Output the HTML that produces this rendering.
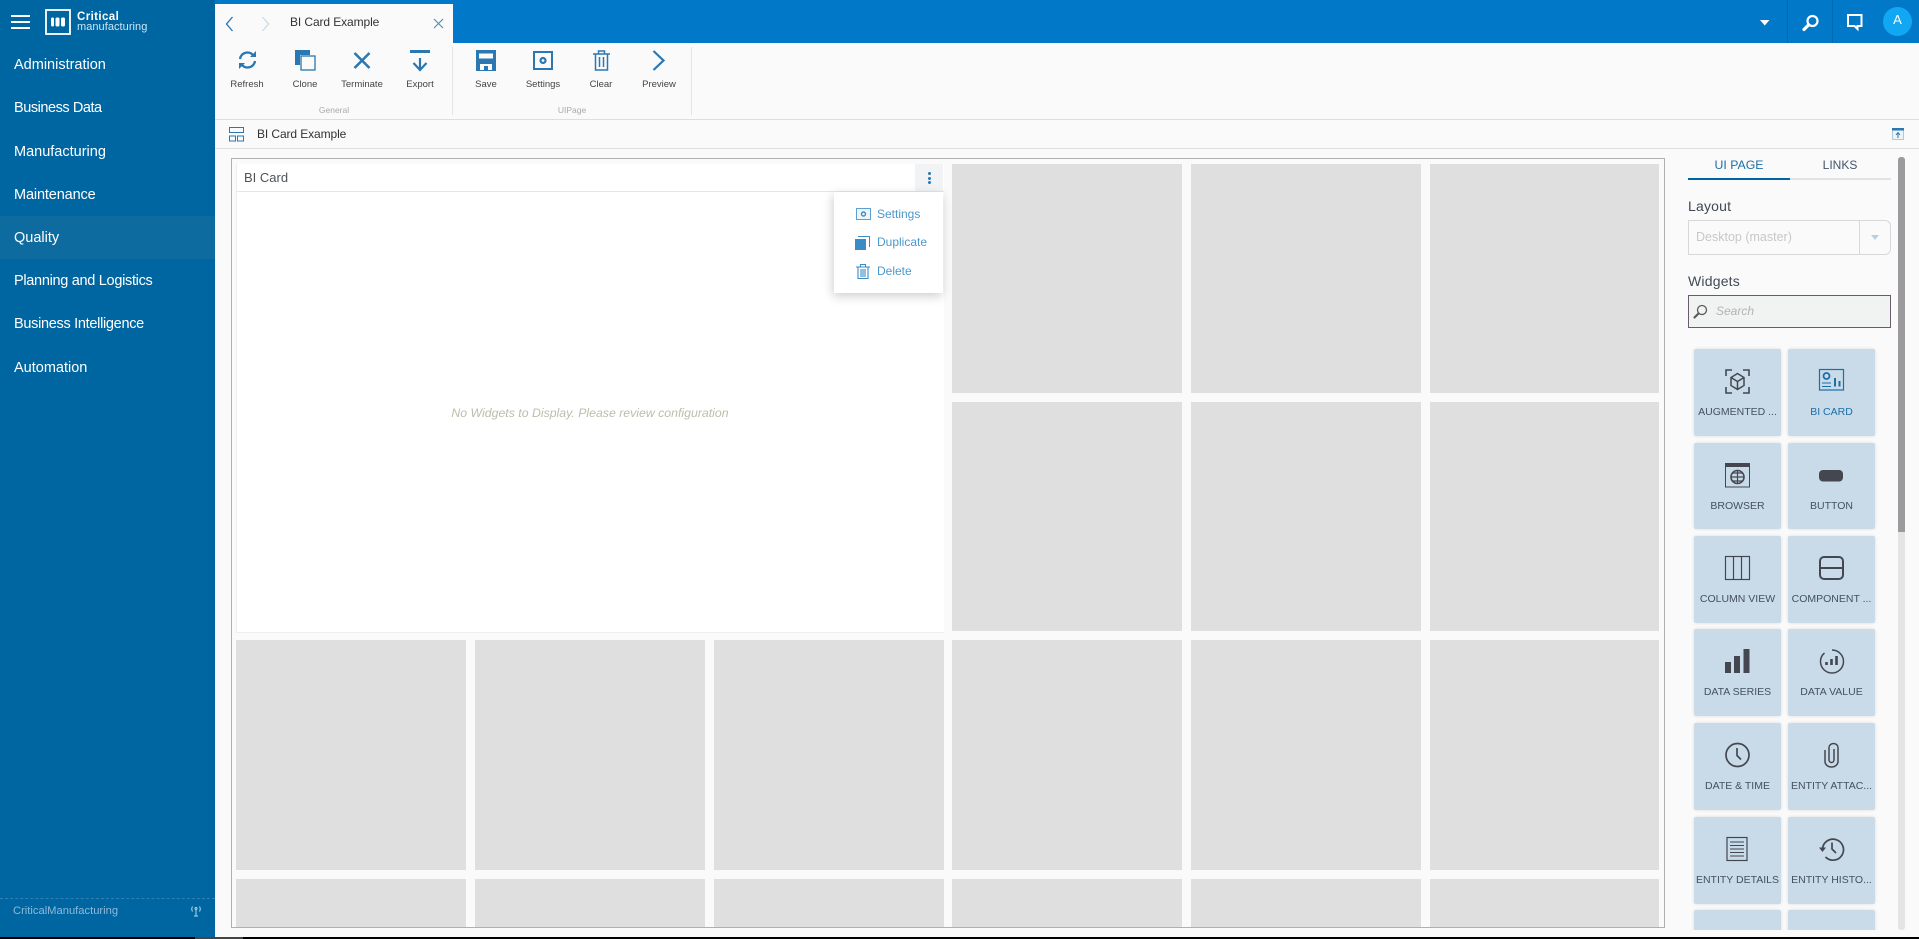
<!DOCTYPE html>
<html><head><meta charset="utf-8"><title>BI Card Example</title>
<style>
html,body{margin:0;padding:0;width:1919px;height:939px;overflow:hidden;background:#000;font-family:"Liberation Sans",sans-serif}
#root{position:relative;width:1919px;height:937px;background:#fafafa;overflow:hidden}
.a{position:absolute}
.t{position:absolute;white-space:nowrap;line-height:16px}
.c{transform:translateX(-50%)}
.nav{position:absolute;left:14px;color:#fff;font-size:14.5px;line-height:18px;white-space:nowrap}
.rl{position:absolute;top:77px;font-size:9.5px;line-height:16px;color:#444;transform:translateX(-50%);white-space:nowrap}
.gl{position:absolute;top:102px;font-size:8.5px;line-height:16px;color:#aaa;transform:translateX(-50%);white-space:nowrap}
.ic{position:absolute;overflow:visible}
.cell{position:absolute;background:#dfdfdf;width:230px}
.tile{position:absolute;width:87px;height:87px;background:#c9dbe9;border-radius:2px;box-shadow:0 0 3px rgba(0,0,0,.12)}
.tile svg{position:absolute;left:31px;top:20px;width:25px;height:25px;overflow:visible}
.tile span{position:absolute;left:0;right:0;top:55px;text-align:center;font-size:10.5px;line-height:16px;color:#45515c;white-space:nowrap}
</style></head>
<body><div id="root">
<!-- top bar -->
<div class="a" style="left:215px;top:0;width:1704px;height:43px;background:#0278c9"></div>
<div class="a" style="left:1787px;top:0;width:1px;height:43px;background:#0268b4"></div>
<div class="a" style="left:1832px;top:0;width:1px;height:43px;background:#0268b4"></div>
<svg class="ic" style="left:1760px;top:20px" width="10" height="6"><path d="M0 0h9.500L4.750 5.500z" fill="#fff"/></svg>
<svg class="ic" style="left:1802px;top:14px" width="18" height="18" fill="none" stroke="#fff"><circle cx="10.500" cy="7" r="5" stroke-width="2.200"/><path d="M6.500 11L2 15.500" stroke-width="3.200" stroke-linecap="round"/></svg>
<svg class="ic" style="left:1847px;top:14px" width="16" height="16"><path d="M1 1h13.500v11h-4v3l-3-3H1z" fill="none" stroke="#fff" stroke-width="2"/></svg>
<div class="a" style="left:1883px;top:7px;width:29px;height:29px;border-radius:50%;background:#12a7f2"></div>
<div class="t c" style="left:1897.500px;top:12px;color:#fff;font-size:13px">A</div>
<!-- sidebar -->
<div class="a" style="left:0;top:0;width:215px;height:937px;background:#0066a2"></div>
<div class="a" style="left:0;top:216px;width:215px;height:43px;background:#0e6b9f"></div>
<div class="a" style="left:11px;top:15px;width:19px;height:2px;background:#fff"></div>
<div class="a" style="left:11px;top:21px;width:19px;height:2px;background:#fff"></div>
<div class="a" style="left:11px;top:27px;width:19px;height:2px;background:#fff"></div>
<svg class="ic" style="left:45px;top:9px" width="26" height="26"><rect x="1" y="1" width="24" height="24" fill="none" stroke="#fff" stroke-width="1.800"/><rect x="6" y="8.500" width="3" height="9" rx="1.500" fill="#fff"/><rect x="10.500" y="8.500" width="4" height="9" rx="1.500" fill="#fff"/><rect x="16" y="8.500" width="4" height="9" rx="1.500" fill="#fff"/></svg>
<div class="t" style="left:77px;top:9px;color:#fff;font-size:11.500px;font-weight:bold;letter-spacing:.4px">Critical</div>
<div class="t" style="left:77px;top:19px;color:#cfe3f2;font-size:11px;letter-spacing:.05px">manufacturing</div>
<div class="nav" style="top:56px">Administration</div>
<div class="nav" style="top:99px;letter-spacing:-.45px">Business Data</div>
<div class="nav" style="top:143px">Manufacturing</div>
<div class="nav" style="top:186px;letter-spacing:-.13px">Maintenance</div>
<div class="nav" style="top:229px">Quality</div>
<div class="nav" style="top:272px;letter-spacing:-.3px">Planning and Logistics</div>
<div class="nav" style="top:315px;letter-spacing:-.3px">Business Intelligence</div>
<div class="nav" style="top:359px">Automation</div>
<div class="a" style="left:0;top:898px;width:215px;border-top:1px dashed #2f80b4"></div>
<div class="t" style="left:13px;top:903px;color:#8dbadb;font-size:11.200px">CriticalManufacturing</div>
<svg class="ic" style="left:190px;top:905px" width="12" height="12" fill="none" stroke="#b5d5ea" stroke-width="1"><path d="M6 4v7M4 11h4M2.500 1.500q-1.500 2.500 0 5M9.500 1.500q1.500 2.500 0 5"/><circle cx="6" cy="3.500" r="1"/></svg>
<!-- tab -->
<div class="a" style="left:215px;top:4px;width:238px;height:39px;background:#fafafa"></div>
<svg class="ic" style="left:225px;top:16px" width="10" height="16"><path d="M7.500 1L1.500 8l6 7" fill="none" stroke="#2374ad" stroke-width="1.300"/></svg>
<svg class="ic" style="left:261px;top:16px" width="10" height="16"><path d="M1.500 1l6 7-6 7" fill="none" stroke="#c9dbe6" stroke-width="1.300"/></svg>
<div class="t" style="left:290px;top:14px;font-size:12px;letter-spacing:-.1px;color:#333">BI Card Example</div>
<svg class="ic" style="left:433px;top:18px" width="11" height="11"><path d="M1 1l9 9M10 1l-9 9" stroke="#5c8fb0" stroke-width="1.200"/></svg>
<!-- ribbon -->
<svg class="ic" style="left:238px;top:50px" width="19" height="20" fill="none" stroke="#2a77b1" stroke-width="2.400"><path d="M2 9a7.500 7.500 0 0 1 13-4"/><path d="M17 11a7.500 7.500 0 0 1-13 4"/><path d="M18 1v6h-6z" fill="#2a77b1" stroke="none"/><path d="M1 19v-6h6z" fill="#2a77b1" stroke="none"/></svg>
<svg class="ic" style="left:295px;top:50px" width="21" height="21"><path d="M0 0h15v5H5v10H0z" fill="#2a77b1"/><rect x="6" y="6" width="14" height="14" fill="#fafafa" stroke="#2a77b1" stroke-width="1.300"/></svg>
<svg class="ic" style="left:353px;top:52px" width="18" height="17"><path d="M1.500 1l15 15M16.500 1l-15 15" stroke="#2a77b1" stroke-width="2.600"/></svg>
<svg class="ic" style="left:410px;top:50px" width="20" height="21" fill="none" stroke="#2a77b1"><path d="M0 1.500h20" stroke-width="3"/><path d="M10 8v12" stroke-width="2.200"/><path d="M3.500 13l6.500 7 6.500-7" stroke-width="2.200"/></svg>
<svg class="ic" style="left:476px;top:50px" width="20" height="21"><path d="M0 0h20v21H0z" fill="#2a77b1"/><rect x="3" y="3.500" width="14" height="5" fill="#fafafa"/><path d="M4 20v-6h12v6z" fill="#fafafa"/><rect x="8" y="16" width="4" height="4" fill="#2a77b1"/></svg>
<svg class="ic" style="left:533px;top:51px" width="20" height="19"><rect x="1" y="1" width="18" height="17" fill="none" stroke="#2a77b1" stroke-width="2"/><circle cx="10" cy="9.500" r="2.500" fill="none" stroke="#2a77b1" stroke-width="2.200"/></svg>
<svg class="ic" style="left:593px;top:50px" width="17" height="21" fill="none" stroke="#2a77b1" stroke-width="1.500"><path d="M0 4h17M5.500 4V1h6v3M2.500 4v16h12V4M6.500 7v10M10.500 7v10"/></svg>
<svg class="ic" style="left:652px;top:50px" width="14" height="21"><path d="M1.500 1l10 9.500-10 9.500" fill="none" stroke="#2a77b1" stroke-width="2.200"/></svg>
<div class="rl" style="left:247px">Refresh</div>
<div class="rl" style="left:305px">Clone</div>
<div class="rl" style="left:362px">Terminate</div>
<div class="rl" style="left:420px">Export</div>
<div class="rl" style="left:486px">Save</div>
<div class="rl" style="left:543px">Settings</div>
<div class="rl" style="left:601px">Clear</div>
<div class="rl" style="left:659px">Preview</div>
<div class="gl" style="left:334px">General</div>
<div class="gl" style="left:572px">UIPage</div>
<div class="a" style="left:452px;top:47px;width:1px;height:68px;background:#e4e4e4"></div>
<div class="a" style="left:691px;top:47px;width:1px;height:68px;background:#e4e4e4"></div>
<div class="a" style="left:215px;top:119px;width:1704px;height:1px;background:#dedede"></div>
<div class="a" style="left:215px;top:148px;width:1704px;height:1px;background:#dedede"></div>
<!-- sub bar -->
<svg class="ic" style="left:229px;top:127px" width="15" height="15" fill="none" stroke="#2a77b1"><rect x=".5" y=".5" width="14" height="5"/><rect x=".5" y="9" width="6" height="5"/><rect x="8.500" y="9" width="6" height="5"/></svg>
<div class="t" style="left:257px;top:126px;font-size:12px;letter-spacing:-.1px;color:#333">BI Card Example</div>
<svg class="ic" style="left:1892px;top:128px" width="12" height="12"><rect x=".5" y=".5" width="11" height="11" fill="#eef3f7" stroke="#b4c9d8"/><rect x="0" y="0" width="12" height="2.500" fill="#2a77b1"/><path d="M6 10V5M4 7l2-2.500L8 7" fill="none" stroke="#2a77b1"/></svg>
<!-- canvas -->
<div class="a" style="left:231px;top:158px;border:1px solid #b0b0b0;box-sizing:content-box;width:1432px;height:768px;overflow:hidden;background:#fafafa">
<div style="position:absolute;left:-232px;top:-159px;width:1919px;height:939px">
<div class="cell" style="left:952px;top:164px;height:229px"></div>
<div class="cell" style="left:1191px;top:164px;height:229px"></div>
<div class="cell" style="left:1430px;top:164px;height:229px;width:229px"></div>
<div class="cell" style="left:952px;top:402px;height:229px"></div>
<div class="cell" style="left:1191px;top:402px;height:229px"></div>
<div class="cell" style="left:1430px;top:402px;height:229px;width:229px"></div>
<div class="cell" style="left:236px;top:640px;height:230px"></div>
<div class="cell" style="left:475px;top:640px;height:230px"></div>
<div class="cell" style="left:714px;top:640px;height:230px"></div>
<div class="cell" style="left:952px;top:640px;height:230px"></div>
<div class="cell" style="left:1191px;top:640px;height:230px"></div>
<div class="cell" style="left:1430px;top:640px;height:230px;width:229px"></div>
<div class="cell" style="left:236px;top:879px;height:60px"></div>
<div class="cell" style="left:475px;top:879px;height:60px"></div>
<div class="cell" style="left:714px;top:879px;height:60px"></div>
<div class="cell" style="left:952px;top:879px;height:60px"></div>
<div class="cell" style="left:1191px;top:879px;height:60px"></div>
<div class="cell" style="left:1430px;top:879px;height:60px;width:229px"></div>
<!-- card -->
<div class="a" style="left:236px;top:164px;width:708px;height:469px;background:#fff;border-left:1px solid #eee;border-bottom:1px solid #eee;box-sizing:border-box"></div>
<div class="a" style="left:236px;top:191px;width:708px;height:1px;background:#e6e6e6"></div>
<div class="a" style="left:915px;top:164px;width:28px;height:27px;background:#f1f3f5"></div>
<div class="a" style="left:928px;top:172px;width:3px;height:3px;background:#2a77b1;border-radius:50%"></div>
<div class="a" style="left:928px;top:176.500px;width:3px;height:3px;background:#2a77b1;border-radius:50%"></div>
<div class="a" style="left:928px;top:181px;width:3px;height:3px;background:#2a77b1;border-radius:50%"></div>
<div class="t" style="left:244px;top:170px;font-size:13px;color:#4e5358">BI Card</div>
<div class="t c" style="left:590px;top:405px;font-size:12.300px;font-style:italic;color:#bdbdab">No Widgets to Display. Please review configuration</div>
<!-- menu -->
<div class="a" style="left:834px;top:192px;width:109px;height:101px;background:#fff;box-shadow:-1px 3px 10px rgba(0,0,0,.2)"></div>
<svg class="ic" style="left:856px;top:208px" width="15" height="12"><rect x=".5" y=".5" width="14" height="11" fill="#eef5fa" stroke="#5aa0d0"/><circle cx="7.500" cy="6" r="2" fill="none" stroke="#3b8bc4" stroke-width="1.400"/></svg>
<svg class="ic" style="left:855px;top:236px" width="15" height="14"><path d="M3 0h12v11h-1V1H3z" fill="#3b8bc4"/><rect x="0" y="3" width="11" height="11" fill="#3b8bc4"/></svg>
<svg class="ic" style="left:856px;top:264px" width="14" height="15" fill="none" stroke="#3b8bc4" stroke-width="1.100"><path d="M0 3h14M4.500 3V.5h5V3M2 3v11.500h10V3M5 5v8M7 5v8M9 5v8"/></svg>
<div class="t" style="left:877px;top:206px;font-size:12px;color:#4a98cc">Settings</div>
<div class="t" style="left:877px;top:234px;font-size:12px;color:#4a98cc">Duplicate</div>
<div class="t" style="left:877px;top:263px;font-size:12px;color:#4a98cc">Delete</div>
</div></div>
<!-- right panel -->
<div class="t c" style="left:1739px;top:157px;font-size:12.300px;color:#1c6ea8">UI PAGE</div>
<div class="t c" style="left:1840px;top:157px;font-size:12px;color:#44546a">LINKS</div>
<div class="a" style="left:1688px;top:178px;width:203px;height:2px;background:#e2e2e2"></div>
<div class="a" style="left:1688px;top:178px;width:102px;height:2px;background:#0066a2"></div>
<div class="t" style="left:1688px;top:198px;font-size:14px;color:#3f4a55;letter-spacing:.2px">Layout</div>
<div class="a" style="left:1688px;top:220px;width:203px;height:35px;border:1px solid #d8d8d8;border-radius:0 6px 6px 0;box-sizing:border-box"></div>
<div class="a" style="left:1859px;top:220px;width:1px;height:35px;background:#d8d8d8"></div>
<svg class="ic" style="left:1870px;top:235px" width="10" height="6"><path d="M1 0h8L5 5z" fill="#b6d2e2"/></svg>
<div class="t" style="left:1696px;top:229px;font-size:12.500px;color:#c8c8c8">Desktop (master)</div>
<div class="t" style="left:1688px;top:273px;font-size:14px;color:#3f4a55;letter-spacing:.2px">Widgets</div>
<div class="a" style="left:1688px;top:295px;width:203px;height:33px;border:1px solid #6b5a6e;background:#f1f3f2;box-sizing:border-box"></div>
<svg class="ic" style="left:1693px;top:304px" width="15" height="15" fill="none" stroke="#5a5a5a"><circle cx="9" cy="6" r="4.500" stroke-width="1.300"/><path d="M5.500 9.500L1.500 13.500" stroke-width="2.200" stroke-linecap="round"/></svg>
<div class="t" style="left:1716px;top:303px;font-size:12px;font-style:italic;color:#b3b3b3">Search</div>
<div class="a" style="left:1898px;top:157px;width:7px;height:773px;background:#e4e4e4;border-radius:3px"></div>
<div class="a" style="left:1898px;top:157px;width:7px;height:375px;background:#9b9a9c;border-radius:3px 3px 0 0"></div>
<!-- tiles -->
<div class="tile" style="left:1694px;top:349px"><svg viewBox="0 0 25 25" fill="none" stroke="#44474f" stroke-width="1.500"><path d="M1 7V1h6M18 1h6v6M1 18v6h6M24 18v6h-6" stroke-width="1.600"/><path d="M12.500 4.500l6.500 4v8l-6.500 4-6.500-4v-8zM6 8.500l6.500 4 6.500-4M12.500 12.500v8"/></svg><span>AUGMENTED ...</span></div>
<div class="tile" style="left:1788px;top:349px"><svg viewBox="0 0 25 25" fill="none" stroke="#1c6ea8"><rect x=".5" y=".5" width="24" height="20.500" stroke-width="1.200"/><circle cx="7.500" cy="7" r="3" stroke-width="1.800"/><path d="M3 14h9M3 17.500h9"/><path d="M16 17.500V9M20.500 17.500V12" stroke-width="2"/></svg><span style="color:#1c6ea8">BI CARD</span></div>
<div class="tile" style="left:1694px;top:443px;height:86px"><svg viewBox="0 0 25 25" fill="none" stroke="#44474f"><rect x=".5" y=".5" width="24" height="23.500"/><rect x="0" y="0" width="25" height="4" fill="#44474f" stroke="none"/><circle cx="12.500" cy="14" r="6.500" stroke-width="1.600"/><path d="M6 14h13M12.500 7.500v13M8 10h9M8 18h9" stroke-width="1.200"/></svg><span>BROWSER</span></div>
<div class="tile" style="left:1788px;top:443px;height:86px"><svg viewBox="0 0 25 25"><rect x="0" y="7" width="24" height="11.500" rx="4" fill="#44474f"/></svg><span>BUTTON</span></div>
<div class="tile" style="left:1694px;top:536px"><svg viewBox="0 0 25 25" fill="none" stroke="#44474f" stroke-width="1.200"><rect x=".5" y=".5" width="24" height="23"/><path d="M8.500 0v24M16.500 0v24"/></svg><span>COLUMN VIEW</span></div>
<div class="tile" style="left:1788px;top:536px"><svg viewBox="0 0 25 25" fill="none" stroke="#44474f" stroke-width="2"><rect x="1" y="1" width="23" height="22" rx="4"/><path d="M1 12h23"/></svg><span>COMPONENT ...</span></div>
<div class="tile" style="left:1694px;top:629px"><svg viewBox="0 0 25 25" fill="#44474f"><rect x="0" y="13" width="6" height="11"/><rect x="9" y="7" width="6" height="17"/><rect x="18.500" y="0" width="6" height="24"/></svg><span>DATA SERIES</span></div>
<div class="tile" style="left:1788px;top:629px"><svg viewBox="0 0 25 25" fill="none" stroke="#44474f"><path d="M13 1a11.500 11.500 0 1 1-11.500 11.500 11 11 0 0 1 4-8.500" stroke-width="1.500"/><path d="M7.500 16v-3M12.500 16v-6M17.500 16V7" stroke-width="2.600"/></svg><span>DATA VALUE</span></div>
<div class="tile" style="left:1694px;top:723px"><svg viewBox="0 0 25 25" fill="none" stroke="#44474f"><circle cx="12.500" cy="12" r="11.500" stroke-width="1.700"/><path d="M12 5v7.500l4 4" stroke-width="1.700"/></svg><span>DATE &amp; TIME</span></div>
<div class="tile" style="left:1788px;top:723px"><svg viewBox="0 0 25 25" fill="none" stroke="#44474f" stroke-width="1.500"><path d="M6 7v11.500a6.500 5.500 0 0 0 13 0V4.500a4.500 4 0 0 0-9 0V17a2.500 2.500 0 0 0 5 0V6"/></svg><span>ENTITY ATTAC...</span></div>
<div class="tile" style="left:1694px;top:817px"><svg viewBox="0 0 25 25" fill="none" stroke="#44474f"><rect x="2" y=".5" width="20" height="23" stroke-width="1.200"/><path d="M5 5h14M5 8.500h14M5 12h14M5 15.500h14M5 19h14" stroke-width="1.100"/></svg><span>ENTITY DETAILS</span></div>
<div class="tile" style="left:1788px;top:817px"><svg viewBox="0 0 25 25" fill="none" stroke="#44474f" stroke-width="1.700"><path d="M3.500 12.500a10.500 10.500 0 1 1 3 7.500"/><path d="M0 10.500h7L3.500 15z" fill="#44474f" stroke="none"/><path d="M13 5.500V12l4 4"/></svg><span>ENTITY HISTO...</span></div>
<div class="tile" style="left:1694px;top:910px;height:30px"></div>
<div class="tile" style="left:1788px;top:910px;height:30px"></div>
<div class="a" style="left:1680px;top:930px;width:239px;height:7px;background:#fafafa"></div>
</div>
<div class="a" style="left:195px;top:937px;width:48px;height:2px;background:#444"></div>
</body></html>
